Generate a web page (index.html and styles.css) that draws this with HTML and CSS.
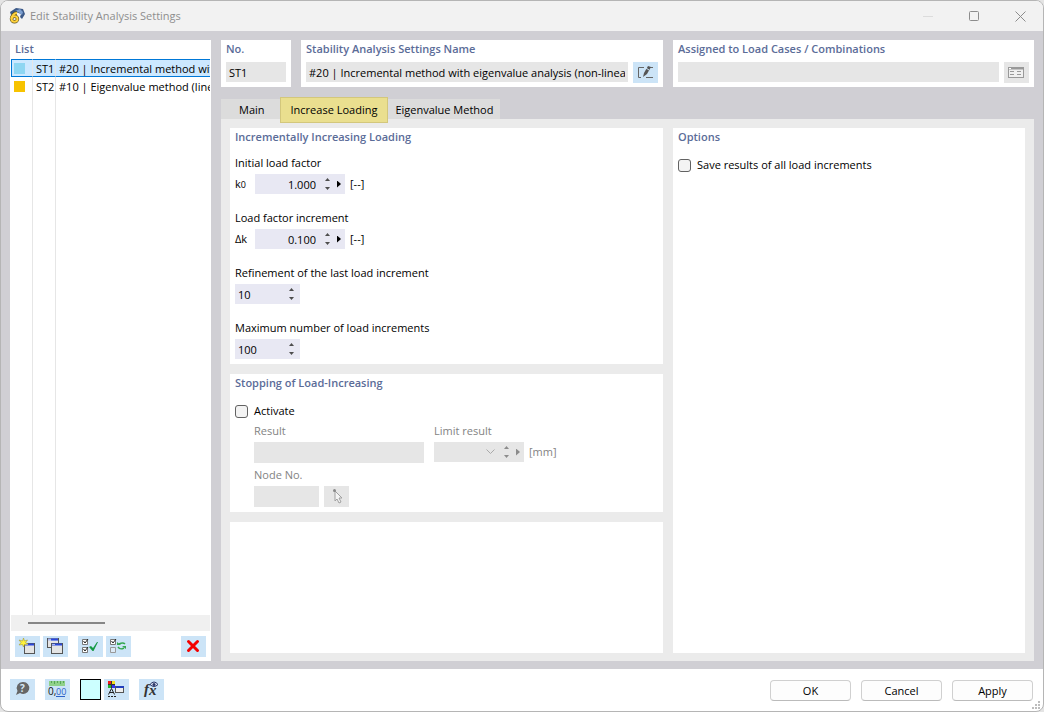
FILE: index.html
```html
<!DOCTYPE html>
<html lang="en">
<head>
    <meta charset="UTF-8">
    <meta name="viewport" content="width=device-width, initial-scale=1.0">
    <title>Edit Stability Analysis Settings</title>
    <link rel="stylesheet" href="styles.css">
</head>
<body>
    <div class="window">
        <header class="titlebar">
            <svg class="app-icon" width="16" height="16" viewBox="0 0 16 16">
                <path d="M1 4 7 0l7 1 2 5-3 5-2-2 1-3-5-2-5 3z" fill="#3d5a88"/>
                <path d="M6 3l5-2 3 3-1 3-4-3z" fill="#7c9fd0"/>
                <ellipse cx="5.500" cy="11" rx="3" ry="2.800" fill="none" stroke="#5b5326" stroke-width="3.400"/>
                <path d="M8 5C5 5 2.500 8 2.500 11" fill="none" stroke="#5b5326" stroke-width="3.400"/>
                <ellipse cx="5.500" cy="11" rx="3" ry="2.800" fill="none" stroke="#ffd23c" stroke-width="2"/>
                <path d="M8 5C5 5 2.500 8 2.500 11" fill="none" stroke="#ffd23c" stroke-width="2"/>
            </svg>
            <h1>Edit Stability Analysis Settings</h1>
            <div class="window-controls">
                <button type="button" aria-label="Minimize" disabled><svg width="11" height="11"><path d="M0 5.500h10" stroke="#dcdcdc"/></svg></button>
                <button type="button" aria-label="Maximize"><svg width="11" height="11"><rect x=".5" y=".5" width="9" height="9" rx="1" fill="none" stroke="#8c8c8c"/></svg></button>
                <button type="button" aria-label="Close"><svg width="11" height="11"><path d="M.5.5l10 10M10.500.5l-10 10" stroke="#8c8c8c"/></svg></button>
            </div>
        </header>

        <main class="content">
            <aside class="card list-panel">
                <h2>List</h2>
                <div class="list-scroll">
                    <table class="list">
                        <colgroup><col class="col-color"><col class="col-no"><col></colgroup>
                        <tbody>
                            <tr class="selected"><td><span class="swatch blue"></span></td><td>ST1</td><td>#20 | Incremental method with eigenvalue analysis</td></tr>
                            <tr><td><span class="swatch yellow"></span></td><td>ST2</td><td>#10 | Eigenvalue method (linear)</td></tr>
                            <tr class="filler"><td></td><td></td><td></td></tr>
                        </tbody>
                    </table>
                </div>
                <div class="scrollbar"><div class="thumb"></div></div>
                <div class="list-tools">
                    <button type="button" class="tool" aria-label="New">
                        <svg width="25" height="21" viewBox="0 0 25 21">
                            <rect x="9.500" y="7.500" width="10" height="10" fill="#e4e4e4" stroke="#555"/>
                            <path d="M10 8.500h9" stroke="#2a48dc" stroke-width="2"/><path d="M10 8.500h3" stroke="#aab8f0"/>
                            <path d="M8.500 2l1 3 3-1-2 2.500L13 8l-3.500.500-1 2.500-1-2.500L4 9l2-2.500L4 4l3.500 1z" fill="#fff33b" stroke="#a59a33" stroke-width=".6"/>
                        </svg>
                    </button>
                    <button type="button" class="tool" aria-label="Copy">
                        <svg width="25" height="21" viewBox="0 0 25 21">
                            <rect x="4.500" y="2.500" width="11" height="9" fill="#e4e4e4" stroke="#555"/><path d="M5 3.500h10" stroke="#aab8f0" stroke-width="2"/><path d="M8 3.500h7" stroke="#2a48dc" stroke-width="2"/>
                            <rect x="8.500" y="7.500" width="11" height="10" fill="#e4e4e4" stroke="#555"/><path d="M9 8.500h10" stroke="#2a48dc" stroke-width="2"/><path d="M9 8.500h3" stroke="#aab8f0"/>
                        </svg>
                    </button>
                    <button type="button" class="tool spaced" aria-label="Select all">
                        <svg width="25" height="21" viewBox="0 0 25 21" fill="none">
                            <path d="M4.500 3.500h5v5h-5zM4.500 11.500h5v5h-5z" fill="#fff" stroke="#777"/>
                            <path d="M5.500 5l1.500 2 3-4M5.500 13l1.500 2 3-4" stroke="#222"/>
                            <path d="M11 11l2-1 2 2 4-6h1l-4.500 9h-1z" fill="#169a44"/>
                        </svg>
                    </button>
                    <button type="button" class="tool" aria-label="Invert selection">
                        <svg width="25" height="21" viewBox="0 0 25 21" fill="none">
                            <path d="M4.500 3.500h5v5h-5z" fill="#fff" stroke="#777"/><path d="M4.500 11.500h5v5h-5z" fill="#dceaf6" stroke="#999"/>
                            <path d="M5.500 5l1.500 2 3-4" stroke="#222"/>
                            <path d="M19 8c-2-2-4-1-6 0M12 11c2 3 4 2 6 1" stroke="#36a852" stroke-width="1.500"/>
                            <path d="M11 6v3h4zM20 13v-3h-4z" fill="#36a852"/>
                        </svg>
                    </button>
                    <button type="button" class="tool last" aria-label="Delete">
                        <svg width="25" height="21" viewBox="0 0 25 21"><path d="M7.500 5.500l9 9M16.500 5.500l-9 9" stroke="#f40000" stroke-width="3" stroke-linecap="round"/></svg>
                    </button>
                </div>
            </aside>

            <section class="details">
                <div class="summary">
                    <div class="card">
                        <label class="title" for="no">No.</label>
                        <div class="row"><input class="field grey" id="no" value="ST1" readonly></div>
                    </div>
                    <div class="card">
                        <label class="title" for="name">Stability Analysis Settings Name</label>
                        <div class="row">
                            <input class="field grey" id="name" value="#20 | Incremental method with eigenvalue analysis (non-linear)" readonly>
                            <button type="button" class="tool" aria-label="Edit name">
                                <svg width="25" height="21" viewBox="0 0 25 21" fill="none">
                                    <path d="M11 5.500H5.500v10H8M17 5.500h3M13 15.500h7" stroke="#666"/>
                                    <path d="M10 15l1-4 4-7 3 1-4 7z" fill="#555"/><path d="M13 6l3 2" stroke="#cde4f7"/>
                                </svg>
                            </button>
                        </div>
                    </div>
                    <div class="card">
                        <label class="title" for="assigned">Assigned to Load Cases / Combinations</label>
                        <div class="row">
                            <input class="field grey" id="assigned" readonly>
                            <button type="button" class="tool off" aria-label="Show assignment" disabled>
                                <svg width="25" height="21" viewBox="0 0 25 21" fill="none">
                                    <rect x="4.500" y="5.500" width="15" height="10" fill="#f0f0f0" stroke="#999"/>
                                    <path d="M4 6.500h16" stroke="#999" stroke-width="2"/><path d="M5 6.500h2" stroke="#fff"/>
                                    <path d="M6 9.500h4M13 9.500h4M6 12.500h4M13 12.500h4" stroke="#999"/>
                                </svg>
                            </button>
                        </div>
                    </div>
                </div>

                <nav class="tabs">
                    <button type="button" class="tab main-tab">Main</button>
                    <button type="button" class="tab active">Increase Loading</button>
                    <button type="button" class="tab">Eigenvalue Method</button>
                </nav>

                <div class="tab-panel">
                    <div class="column">
                        <section class="card loading">
                            <h2>Incrementally Increasing Loading</h2>
                            <div class="group">
                                <label for="k0">Initial load factor</label>
                                <div class="row">
                                    <span class="symbol">k<small>0</small></span>
                                    <div class="spin">
                                        <input id="k0" value="1.000">
                                        <span class="steppers"><button type="button" class="up" aria-label="Increase"></button><button type="button" class="down" aria-label="Decrease"></button></span>
                                        <button type="button" class="more" aria-label="More"></button>
                                    </div>
                                    <span>[--]</span>
                                </div>
                            </div>
                            <div class="group">
                                <label for="dk">Load factor increment</label>
                                <div class="row">
                                    <span class="symbol">Δk</span>
                                    <div class="spin">
                                        <input id="dk" value="0.100">
                                        <span class="steppers"><button type="button" class="up" aria-label="Increase"></button><button type="button" class="down" aria-label="Decrease"></button></span>
                                        <button type="button" class="more" aria-label="More"></button>
                                    </div>
                                    <span>[--]</span>
                                </div>
                            </div>
                            <div class="group">
                                <label for="refinement">Refinement of the last load increment</label>
                                <div class="spin short">
                                    <input id="refinement" value="10">
                                    <span class="steppers"><button type="button" class="up" aria-label="Increase"></button><button type="button" class="down" aria-label="Decrease"></button></span>
                                </div>
                            </div>
                            <div class="group">
                                <label for="maximum">Maximum number of load increments</label>
                                <div class="spin short">
                                    <input id="maximum" value="100">
                                    <span class="steppers"><button type="button" class="up" aria-label="Increase"></button><button type="button" class="down" aria-label="Decrease"></button></span>
                                </div>
                            </div>
                        </section>

                        <section class="card stopping">
                            <h2>Stopping of Load-Increasing</h2>
                            <label class="check"><input type="checkbox">Activate</label>
                            <div class="stop-fields">
                                <div class="stop-result">
                                    <label for="result">Result</label>
                                    <select class="field grey" id="result" disabled><option></option></select>
                                </div>
                                <div>
                                    <label for="limit">Limit result</label>
                                    <div class="row">
                                        <div class="spin off">
                                            <input id="limit" disabled>
                                            <svg width="9" height="6" fill="none"><path d="M.5.5l4 4 4-4" stroke="#aaa"/></svg>
                                            <span class="steppers"><button type="button" class="up" aria-label="Increase" disabled></button><button type="button" class="down" aria-label="Decrease" disabled></button></span>
                                            <button type="button" class="more" aria-label="More" disabled></button>
                                        </div>
                                        <span>[mm]</span>
                                    </div>
                                </div>
                            </div>
                            <div class="stop-fields">
                                <div>
                                    <label for="node">Node No.</label>
                                    <div class="row">
                                        <input class="field grey node" id="node" disabled>
                                        <button type="button" class="tool off" aria-label="Pick node" disabled>
                                            <svg width="25" height="21" viewBox="0 0 25 21">
                                                <path d="M11 5v10l2-2 2 4 2-1-2-4h3z" fill="#f4f4f4" stroke="#a0a0a0"/><circle cx="10.500" cy="4.500" r="1.500" fill="#888"/>
                                            </svg>
                                        </button>
                                    </div>
                                </div>
                            </div>
                        </section>
                        <section class="card rest"></section>
                    </div>
                    <section class="card options">
                        <h2>Options</h2>
                        <label class="check"><input type="checkbox">Save results of all load increments</label>
                    </section>
                </div>
            </section>
        </main>

        <footer class="footer">
            <button type="button" class="tool" aria-label="Help">
                <svg width="25" height="21" viewBox="0 0 25 21">
                    <path d="M13 3a6 6 0 1 1-3 11l-4 2 1.500-4A6 6 0 0 1 13 3z" fill="#666"/>
                    <text x="10" y="13" font-size="10" font-weight="bold" fill="#d8e8f5">?</text>
                </svg>
            </button>
            <button type="button" class="tool spaced" aria-label="Units">
                <svg width="25" height="21" viewBox="0 0 25 21">
                    <path d="M4 2h16v5H4z" fill="#8fd18a"/><path d="M6.500 2v2M9.500 2v3M12.500 2v2M15.500 2v3M18.500 2v2" stroke="#57a657"/>
                    <text x="3" y="16" font-size="10" fill="#111">0,</text><text x="11" y="16" font-size="9" fill="#2d62c8">00</text>
                    <path d="M11 17.500h9" stroke="#2d62c8"/>
                </svg>
            </button>
            <button type="button" class="color spaced" aria-label="Color"></button>
            <button type="button" class="tool" aria-label="Display">
                <svg width="25" height="21" viewBox="0 0 25 21">
                    <path d="M4 2h7v7H4z" fill="#333"/><path d="M4 2h3v3H4z" fill="#f01818"/><path d="M8 2h3v3H8z" fill="#f2df22"/><path d="M4 6h3v3H4z" fill="#20b030"/><path d="M8 6h3v3H8z" fill="#3030f0"/>
                    <path d="M4.500 15.500l3-6 3 6M5.500 13.500h4" stroke="#222" fill="none"/><path d="M4 17.500h8" stroke="#222" stroke-dasharray="2 1"/>
                    <rect x="11.500" y="7.500" width="8" height="6" fill="#eee" stroke="#555"/><path d="M12 8h8" stroke="#223fbd" stroke-width="2"/>
                </svg>
            </button>
            <button type="button" class="tool spaced" aria-label="Formula">
                <svg width="25" height="21" viewBox="0 0 25 21">
                    <text class="formula" x="5" y="15" font-size="15">f</text><text class="formula" x="10" y="16" font-size="15">x</text>
                    <path d="M11 5.500q4-5 8 0-4 4-8 0z" fill="#dfe6f5" stroke="#2b3768"/><circle cx="15" cy="5.500" r="1.500" fill="#2b3768"/>
                </svg>
            </button>
            <div class="dialog-buttons">
                <button type="button">OK</button>
                <button type="button">Cancel</button>
                <button type="button">Apply</button>
            </div>
            <svg class="grip" width="9" height="9" fill="#bdbdbd"><path d="M6 0h2v2H6zM3 3h2v2H3zM6 3h2v2H6zM0 6h2v2H0zM3 6h2v2H3zM6 6h2v2H6z"/></svg>
        </footer>
    </div>
</body>
</html>
```
FILE: styles.css
```css
* {
    box-sizing: border-box;
}
body {
    margin: 0;
    background: #e4e4e4;
    font-family: "Open Sans", "Noto Sans", sans-serif;
    font-size: 11px;
    line-height: 16px;
    color: #000;
}
button, input, select {
    font: inherit;
    color: inherit;
    margin: 0;
    padding: 0;
    border: none;
    border-radius: 0;
    background: none;
}
svg {
    display: block;
}
.window {
    display: flex;
    flex-direction: column;
    min-height: 100vh;
    border: 1px solid #b5b5b5;
    border-radius: 8px;
    overflow: hidden;
    background: #fff;
}

/* title bar */
.titlebar {
    display: flex;
    align-items: center;
    height: 30px;
    padding-left: 8px;
    background: #f2f2f2;
}
h1 {
    flex: 1;
    margin: 0 0 0 5px;
    font-size: 11px;
    font-weight: normal;
    color: #8e8e8e;
}
.window-controls {
    display: flex;
}
.window-controls button {
    display: flex;
    align-items: center;
    justify-content: center;
    width: 46px;
    height: 30px;
}

/* main area */
.content {
    flex: 1;
    display: flex;
    gap: 10px;
    padding: 9px 9px 8px;
    background: #d0cfd4;
}
.card {
    padding: 0 5px 5px;
    background: #fff;
    min-width: 0;
}
h2, .title {
    display: block;
    margin: 0;
    font-size: 11px;
    font-weight: 600;
    line-height: 18px;
    color: #5b6c98;
    white-space: nowrap;
}
.row {
    display: flex;
    gap: 5px;
}
.tool {
    flex: none;
    width: 25px;
    height: 21px;
    background: #cce4f7;
}
.tool.off {
    background: #e6e6e6;
}
.field {
    width: 100%;
    min-width: 0;
    height: 20px;
    padding: 1px 3px 0;
}
.grey {
    background: #e6e6e6;
}

/* list */
.list-panel {
    flex: none;
    display: flex;
    flex-direction: column;
    width: 201px;
    padding: 0 1px 4px;
}
.list-panel h2 {
    padding-left: 4px;
}
.list-scroll {
    flex: 1;
    display: flex;
    overflow: hidden;
    padding-top: 1px;
}
.list {
    width: 100%;
    table-layout: fixed;
    border-collapse: separate;
    border-spacing: 0;
}
.col-color {
    width: 22px;
}
.col-no {
    width: 23px;
}
.list td {
    height: 18px;
    padding: 1px 0 0 3px;
    border-right: 1px solid #e6e6e6;
    white-space: nowrap;
    overflow: hidden;
}
.list td:last-child {
    border-right: none;
}
.list .filler td {
    height: auto;
}
.list .selected td {
    padding-top: 1px;
    line-height: 15px;
    background: #cce8ff;
    border-top: 1px solid #0078d7;
    border-bottom: 1px solid #0078d7;
}
.list .selected td:first-child {
    padding-left: 2px;
    border-left: 1px solid #0078d7;
}
.swatch {
    display: block;
    width: 11px;
    height: 11px;
}
.blue {
    background: #8ed6f2;
}
.yellow {
    background: #f7c300;
}
.scrollbar {
    height: 16px;
    padding: 7px 17px;
    background: #f0f0f0;
}
.thumb {
    width: 77px;
    height: 2px;
    background: #868686;
}
.list-tools {
    display: flex;
    gap: 3px;
    padding: 5px 4px 0;
}
.list-tools .spaced {
    margin-left: 7px;
}
.list-tools .last {
    margin-left: auto;
}

/* header cards */
.details {
    flex: 1;
    min-width: 0;
    display: flex;
    flex-direction: column;
}
.summary {
    display: grid;
    grid-template-columns: 70px 362fr 361fr;
    gap: 10px;
}
.summary .card {
    padding-bottom: 4px;
}
.summary .row {
    height: 25px;
    padding-top: 4px;
}

/* tabs */
.tabs {
    display: flex;
    align-items: center;
    height: 32px;
    padding-top: 13px;
}
.tab {
    height: 21px;
    padding: 0 7px;
    background: #dcdcdc;
}
.tab.main-tab {
    padding: 0 15px 0 18px;
}
.tab.active {
    position: relative;
    height: 26px;
    padding: 0 10px;
    background: #eadf8f;
    border: 1px solid #d3c77c;
}
.tab-panel {
    flex: 1;
    display: grid;
    grid-template-columns: 433fr 352fr;
    gap: 10px;
    padding: 9px 9px 8px;
    background: #ebebeb;
}
.column {
    display: flex;
    flex-direction: column;
    gap: 10px;
    min-width: 0;
}
.rest {
    flex: 1;
}
.group {
    padding-top: 9px;
}
.group + .group {
    padding-top: 16px;
}
.group > label, .stop-fields label {
    display: block;
    margin-bottom: 3px;
}
.group .row, .stop-fields .row {
    line-height: 20px;
}
.symbol {
    width: 15px;
}
.symbol small {
    font-size: 9px;
    line-height: 1;
}

/* number fields */
.spin {
    display: flex;
    align-items: center;
    width: 90px;
    height: 20px;
    padding-right: 4px;
    background: #e8e8f3;
}
.spin input {
    flex: 1;
    min-width: 0;
    height: 20px;
    padding: 1px 9px 0 3px;
    text-align: right;
}
.spin.short {
    width: 65px;
}
.spin.short input {
    text-align: left;
}
.spin svg {
    margin-right: 9px;
}
.steppers {
    display: flex;
    flex-direction: column;
    gap: 6px;
    margin-right: 7px;
    color: #4d4d4d;
}
.short .steppers {
    margin-right: 2px;
}
.up, .down, .more {
    display: block;
    width: 5px;
    height: 3px;
    background: currentColor;
}
.up {
    clip-path: polygon(50% 0, 100% 100%, 0 100%);
}
.down {
    clip-path: polygon(0 0, 100% 0, 50% 100%);
}
.more {
    width: 4px;
    height: 7px;
    clip-path: polygon(0 0, 100% 50%, 0 100%);
}
.spin.off {
    background: #e6e6e6;
}
.spin.off, .off .steppers {
    color: #8c8c8c;
}

/* check boxes */
.check {
    display: flex;
    align-items: center;
    gap: 6px;
    margin-top: 11px;
}
.check input {
    appearance: none;
    width: 13px;
    height: 13px;
    background: #f3f3f3;
    border: 1px solid #626262;
    border-radius: 3px;
}
.stop-fields {
    display: flex;
    gap: 10px;
    padding: 4px 0 0 19px;
    color: #838383;
}
.stop-result {
    width: 170px;
}
.stop-fields .field {
    display: block;
    height: 21px;
    appearance: none;
    opacity: 1;
}
.stop-fields .node {
    width: 65px;
}

/* footer */
.footer {
    position: relative;
    display: flex;
    gap: 3px;
    height: 42px;
    padding: 10px 10px 0 9px;
}
.footer .spaced {
    margin-left: 7px;
}
.footer .color {
    width: 21px;
    height: 21px;
    background: #ccffff;
    border: 1px solid #000;
}
.formula {
    font-family: "Liberation Serif", serif;
    font-style: italic;
    font-weight: bold;
    fill: #333;
}
.dialog-buttons {
    display: flex;
    gap: 10px;
    margin-left: auto;
    padding-top: 1px;
}
.dialog-buttons button {
    width: 81px;
    height: 21px;
    background: #fdfdfd;
    border: 1px solid #d0d0d0;
    border-bottom-color: #bbb;
    border-radius: 4px;
}
.grip {
    position: absolute;
    right: 2px;
    bottom: 1px;
}
```
